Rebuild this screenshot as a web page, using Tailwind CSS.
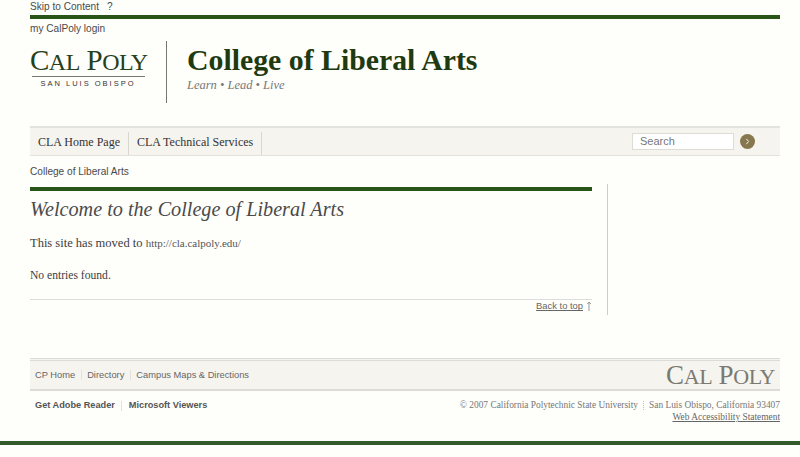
<!DOCTYPE html>
<html><head><meta charset="utf-8">
<script src="https://cdn.jsdelivr.net/npm/@tailwindcss/browser@4"></script>
</head>
<body class="bg-[#fefefb] h-[457px] overflow-hidden font-['Liberation_Sans',sans-serif] text-[#444]">
<div class="mx-[30px] w-[750px]">
  <div class="h-[15px] flex items-center gap-[8px] text-[10.1px] leading-[12px] text-[#4a4a4a] pb-[2px]"><span>Skip to Content</span><span>?</span></div>
  <div class="h-[4px] bg-[#2a5518]"></div>
  <div class="h-[18px] flex items-center text-[10.1px] pt-[1px] text-[#4a4a4a]">my CalPoly login</div>
  <div class="h-[89px] flex items-start">
    <div class="w-[136px] h-[62px] mt-[4px] flex border-r border-[#777] box-content shrink-0">
      <div class="w-[116px] flex flex-col items-center">
        <div class="h-[29px] w-full mt-[5px] font-['Liberation_Serif',serif] text-[#26401c] text-[29px] leading-[29px] whitespace-nowrap tracking-[-0.5px] text-center"><span>C</span><span class="text-[24px]">AL</span> <span>P</span><span class="text-[24px]">OLY</span></div>
        <div class="w-[113px] h-px bg-[#777] mt-[1px]"></div>
        <div class="text-[7.5px] leading-[10px] mt-[2px] tracking-[2px] text-[#333] whitespace-nowrap">SAN LUIS OBISPO</div>
      </div>
    </div>
    <div class="ml-[20px] font-['Liberation_Serif',serif]">
      <div class="text-[29.8px] leading-[34px] font-bold text-[#1d3a10] mt-[6px] whitespace-nowrap">College of Liberal Arts</div>
      <div class="italic text-[12.5px] leading-[14px] text-[#777] mt-[1px]">Learn • Lead • Live</div>
    </div>
  </div>
  <div class="h-[30px] bg-[#f6f4ef] border-t-2 border-b border-[#e3e2dc] flex items-center justify-between font-['Liberation_Serif',serif] text-[12px] text-[#333]">
    <div class="flex h-[23px] self-end">
      <a class="px-[8px] leading-[20px] border-r border-[#d9d8d0] w-[99px] whitespace-nowrap">CLA Home Page</a>
      <a class="px-[8px] leading-[20px] border-r border-[#d9d8d0] w-[133px] whitespace-nowrap">CLA Technical Services</a>
    </div>
    <div class="flex items-center mr-[25px]">
      <div class="w-[102px] h-[17px] bg-white border border-[#dedcd5] pl-[7px] font-['Liberation_Sans',sans-serif] text-[11px] leading-[15px] text-[#777]">Search</div>
      <div class="ml-[6px] w-[15px] h-[15px] rounded-full bg-[#86774f] flex items-center justify-center">
        <svg width="5" height="7" viewBox="0 0 5 7" fill="none"><path d="M1.3 .8 3.6 3.5 1.3 6.2" stroke="#f3efe2" stroke-width="1"/></svg>
      </div>
    </div>
  </div>
  <div class="h-[31px] flex items-center text-[10.1px] text-[#4a4a4a]">College of Liberal Arts</div>
  <div class="flex h-[131px] mt-[-3px]">
    <div class="w-[562px] pt-[3px]">
      <div class="h-[4px] bg-[#2a5518]"></div>
      <h1 class="font-['Liberation_Serif',serif] italic text-[20.2px] leading-[24px] text-[#4a4a4a] mt-[6px]">Welcome to the College of Liberal Arts</h1>
      <p class="font-['Liberation_Serif',serif] text-[12.5px] leading-[16px] mt-[14px] text-[#3d3d3d]">This site has moved to <a class="text-[11px] text-[#555]">http://cla.calpoly.edu/</a></p>
      <p class="font-['Liberation_Serif',serif] text-[11.6px] leading-[14px] mt-[18px] text-[#3d3d3d]">No entries found.</p>
      <div class="h-px bg-[#ddd] mt-[16px]"></div>
      <div class="flex justify-end items-center h-[13px] text-[9.4px] text-[#666]"><a class="underline">Back to top</a><svg class="ml-[3px] mt-[-1px]" width="6" height="10" viewBox="0 0 6 10" fill="none"><path d="M3 10V1M1.2 3 3 1l1.8 2" stroke="#999" stroke-width="1"/></svg></div>
    </div>
    <div class="w-px bg-[#ccc] ml-[15px]"></div>
  </div>
  <div class="mt-[43px] h-[33px] bg-[#f6f4ef] border-t-3 border-double border-b-2 border-b-solid border-[#dcdbd5] flex items-center justify-between">
    <div class="flex items-center pl-[5px] text-[9.3px] text-[#666] leading-[12px]">
      <a>CP Home</a><span class="w-px h-[10px] bg-[#e2e1da] mx-[5.5px]"></span><a>Directory</a><span class="w-px h-[10px] bg-[#e2e1da] mx-[5.5px]"></span><a>Campus Maps &amp; Directions</a>
    </div>
    <div class="font-['Liberation_Serif',serif] text-[#7b7a72] text-[27px] leading-[26px] mr-[5px] mt-[1px] whitespace-nowrap tracking-[-0.4px]"><span>C</span><span class="text-[22px]">AL</span> <span>P</span><span class="text-[22px]">OLY</span></div>
  </div>
  <div class="flex justify-between h-[38px]">
    <div class="flex items-center pl-[5px] h-[30px] text-[9.2px] font-bold text-[#555]">
      <a>Get Adobe Reader</a><span class="w-px h-[10px] bg-[#e2e1da] mx-[6.5px]"></span><a>Microsoft Viewers</a>
    </div>
    <div class="font-['Liberation_Serif',serif] text-[9.4px] leading-[12px] text-[#777] text-right pt-[8px]">
      <div class="flex items-center justify-end">© 2007 California Polytechnic State University<span class="h-[9px] border-l border-dotted border-[#bbb] mx-[5px]"></span>San Luis Obispo, California 93407</div>
      <a class="underline text-[#666]">Web Accessibility Statement</a>
    </div>
  </div>
</div>
<div class="h-[4px] bg-[#335a2a] mt-[12px]"></div>
</body></html>
